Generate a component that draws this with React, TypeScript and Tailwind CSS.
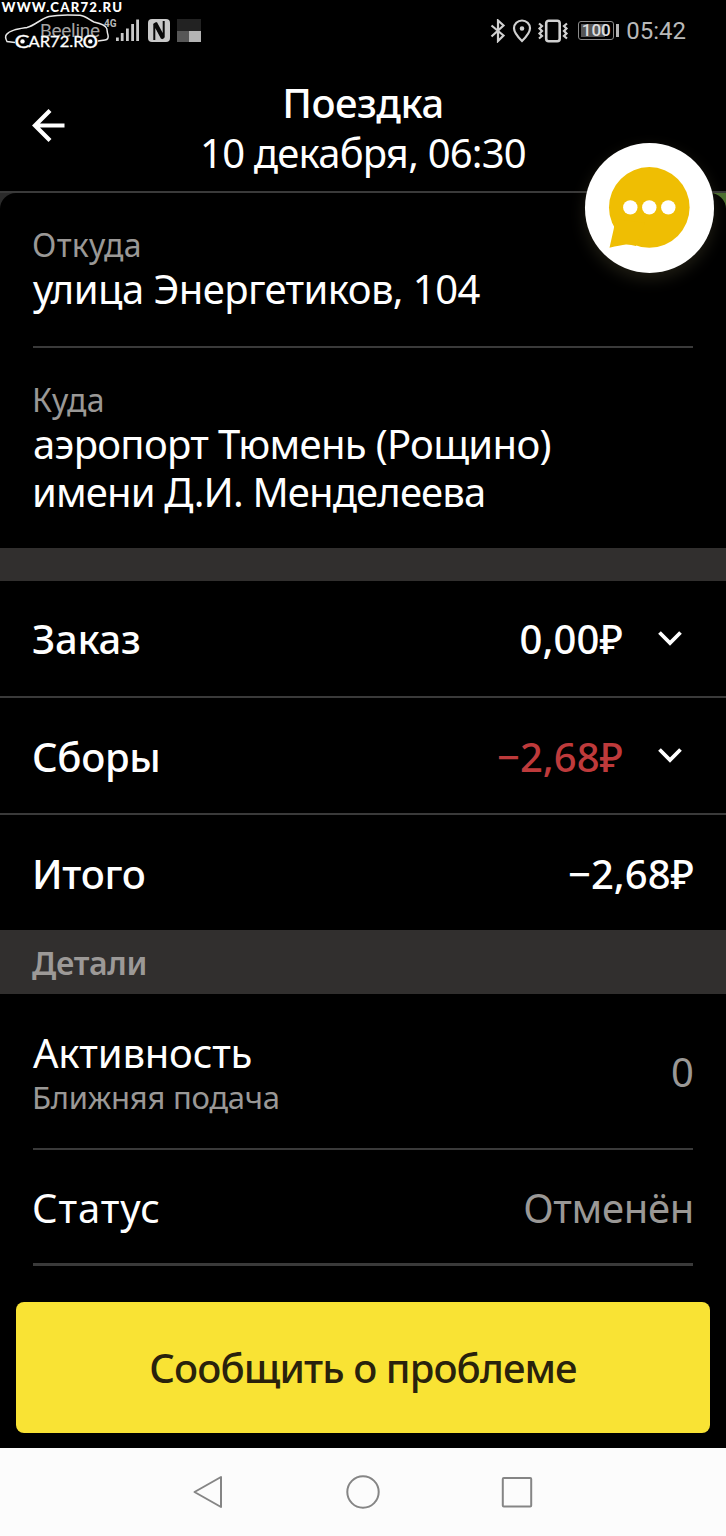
import clsx from 'clsx'
import type { ReactNode } from 'react'

/** Site watermark: address line and a small car drawn over the status bar. */
function Watermark() {
  return (
    <svg className="absolute left-0 top-0" width="130" height="52" viewBox="0 0 130 52" fill="none">
      <text x="1.5" y="11.8" textLength="120.5" fill="#fff" fontFamily="Lato, sans-serif" fontWeight="900" fontSize="13.2">
        WWW.CAR72.RU
      </text>
      <path
        d="M15 42.5 7 41.5Q4.5 37 6.5 34.5C10 30 18 29 27 27.5 35 25.5 41 18.5 49 16.5 58 14.5 72 14.8 80 15.3 86 16 90 20.5 94 22 98 23 105 24.5 106.5 28 107.5 30 106.800 32 108 35Q109 39.5 105 40L98 41"
        stroke="#e8e8e8"
        strokeWidth="1.5"
      />
      <g fill="#fff" stroke="#fff" strokeWidth="0.3" fontFamily="Lato, sans-serif">
        <text x="14.5" y="47.5" textLength="15" lengthAdjust="spacingAndGlyphs" fontSize="17">C</text>
        <text x="28.5" y="47.3" textLength="55" lengthAdjust="spacingAndGlyphs" fontSize="15.8">AR72.R</text>
        <text x="82.500" y="47.5" textLength="15.5" lengthAdjust="spacingAndGlyphs" fontSize="17">O</text>
      </g>
      <circle cx="22.500" cy="41.400" r="2.200" fill="#fff" />
      <circle cx="90.300" cy="41.400" r="2.200" fill="#fff" />
    </svg>
  )
}

function StatusBar() {
  return (
    <div className="flex h-[60px] shrink-0 items-start pl-10 pr-10 pt-[19px] font-[Roboto,sans-serif] text-[#b9b9b9]">
      <span className="mt-[1px] w-[64px] text-[19px] leading-[22px] tracking-[-0.3px] text-[#a4a4a4]">Beeline</span>
      <span className="-mt-[2px] w-3 text-[10px] font-bold leading-[14px]">4G</span>
      <svg width="23" height="23" viewBox="0 0 23 23" fill="#c9c9c9">
        <rect x="0" y="18.5" width="2.8" height="3.5" />
        <rect x="4.8" y="14" width="2.8" height="8" />
        <rect x="10" y="9.5" width="2.8" height="12.5" />
        <rect x="15.2" y="5" width="2.8" height="17" />
        <rect x="20.2" y="0.5" width="2.8" height="21.5" />
      </svg>
      <svg className="ml-[9px]" width="22" height="23" viewBox="0 0 22 23" fill="none">
        <rect width="22" height="23" rx="4" fill="#c9c9c9" />
        <path d="M6.300 21V5L14 19.500" stroke="#0a0a0a" strokeWidth="2" />
        <path d="M8 3.500 15.700 18V2" stroke="#0a0a0a" strokeWidth="2" />
        <path d="M6.500 4 15.500 19.500" stroke="#0a0a0a" strokeWidth="2.600" />
      </svg>
      <span className="ml-[7px] grid h-[23px] w-6 grid-cols-2 grid-rows-2">
        <i className="col-span-2 bg-[#222]" />
        <i className="bg-[#575757]" />
        <i className="bg-[#b4b4b4]" />
      </span>

      <svg className="ml-auto" width="80" height="24" viewBox="0 0 80 24" fill="none" stroke="#d0d0d0" strokeWidth="2.2">
        <path d="M1.5 6.5 13.5 16.5 8 22V1.500L13.5 6.500 1.5 17.5" />
        <path d="M32 1.5C27.5 1.5 24 5 24 9.2 24 14 28.5 18.5 32 22 35.5 18.5 40 14 40 9.2 40 5 36.5 1.5 32 1.5Z" />
        <circle cx="32" cy="9.5" r="1.2" fill="#d0d0d0" />
        <rect x="56.2" y="1.8" width="13.5" height="20.4" rx="2.5" strokeWidth="2.6" />
        <path d="M49 4.500 52 7 49.500 9.5 52 12 49.500 14.5 52 17 49 19.5M77 4.5 74 7 76.500 9.5 74 12 76.500 14.5 74 17 77 19.5" />
      </svg>
      <span className="ml-[8px] mt-[2px] flex h-[19px] w-[36px] items-center rounded-[3px] border border-[#8a8a8a] p-[2px]">
        <b className="flex h-full w-full items-center justify-center bg-linear-to-r from-[#555] from-80% to-black to-80% text-[17px] font-medium leading-none text-[#ddd]">100</b>
      </span>
      <i className="ml-[2px] mt-[5px] h-[13px] w-[3px] bg-[#b5b5b5]" />
      <span className="ml-[7px] text-[24px] leading-[25px]">05:42</span>
    </div>
  )
}

function Chevron() {
  return (
    <svg className="ml-[34px] mr-[43px]" width="26" height="18" viewBox="0 0 26 18" fill="none">
      <path d="M2.5 2.5 13 13 23.5 2.5" stroke="#fff" strokeWidth="3.8" />
    </svg>
  )
}

function MoneyRow({ label, children, className }: { label: string; children: ReactNode; className?: string }) {
  return (
    <div className={clsx('flex shrink-0 items-center pl-8 text-[40px] font-medium leading-[55px]', className)}>
      <span className="flex-1 tracking-[-0.3px]">{label}</span>
      {children}
    </div>
  )
}

function ChatButton() {
  return (
    <button type="button" className="absolute left-[585px] top-[143px] h-[130px] w-[129px] rounded-full bg-white shadow-[0_6px_16px_rgba(70,66,45,0.45)]">
      <svg width="129" height="130" viewBox="0 0 129 130">
        <circle cx="64.3" cy="64.4" r="40.3" fill="#efbe03" />
        <path d="M26 75Q30.5 81 28.5 87L24.5 104.7Q35 102 41 101.4 46 101.3 51 103L60 80Z" fill="#efbe03" />
        <g fill="#fff">
          <circle cx="45.3" cy="64.4" r="7.2" />
          <circle cx="64.3" cy="64.4" r="7.2" />
          <circle cx="83.3" cy="64.4" r="7.2" />
        </g>
      </svg>
    </button>
  )
}

export default function App() {
  return (
    <div className="relative flex h-[1536px] w-[726px] flex-col overflow-hidden bg-black font-['Noto_Sans',sans-serif] text-white">
      <StatusBar />
      <Watermark />

      <header className="flex h-[133px] shrink-0 border-b-2 border-[#3a3a3a] pt-[18px] text-[40px] leading-[50px]">
        <svg className="ml-8 mt-[31px]" width="34" height="34" viewBox="0 0 34 34" fill="none" stroke="#fff" strokeWidth="4.2">
          <path d="M32.5 16.5H3.5M18 1.5 3 16.5 18 31.5" />
        </svg>
        <div className="mr-[66px] flex-1 text-center">
          <h1 className="font-medium tracking-[-0.5px]">Поездка</h1>
          <p className="tracking-[-0.8px]">10 декабря, 06:30</p>
        </div>
      </header>

      <div className="h-[355px] shrink-0 bg-linear-to-r from-[#2b2b2b] from-50% to-[#4c7030] to-50%">
        <section className="h-full rounded-t-[16px] bg-black px-[33px] pt-[34px]">
          <p className="-ml-[1px] text-[32px] leading-[35px] tracking-[0.3px] text-[#9a9896]">Откуда</p>
          <p className="text-[40px] leading-[53px] tracking-[-0.57px]">улица Энергетиков, 104</p>
          <hr className="mb-[34px] mt-[31px] border-t-2 border-[#3a3a3a]" />
          <p className="-ml-[1px] text-[32px] leading-[35px] tracking-[0.3px] text-[#9a9896]">Куда</p>
          <p className="mt-[3px] text-[40px] leading-12 tracking-[-0.68px]">аэропорт Тюмень (Рощино)</p>
          <p className="-ml-[1px] text-[40px] leading-12 tracking-[-0.86px]">имени Д.И. Менделеева</p>
        </section>
      </div>

      <div className="h-[33px] shrink-0 bg-[#312f2e]" />

      <MoneyRow label="Заказ" className="h-[115px]">
        <span className="tracking-[0.1px]">0,00₽</span>
        <Chevron />
      </MoneyRow>
      <MoneyRow label="Сборы" className="h-[117px] border-t-2 border-[#3a3a3a] pt-[1px]">
        <span className="text-[#be3a3b]">−2,68₽</span>
        <Chevron />
      </MoneyRow>
      <MoneyRow label="Итого" className="h-[117px] border-t-2 border-[#3a3a3a] pt-[2px]">
        <span className="mr-8">−2,68₽</span>
      </MoneyRow>

      <h2 className="flex h-16 shrink-0 items-center bg-[#312f2e] pl-8 text-[32px] font-semibold leading-[35px] tracking-[-0.3px] text-[#9c9997]">
        Детали
      </h2>

      <section className="mx-[33px] shrink-0 text-[40px]">
        <div className="flex h-[156px] items-center justify-between border-b-2 border-[#3a3a3a]">
          <div className="pt-[4px]">
            <p className="leading-[47px] tracking-[-0.2px]">Активность</p>
            <p className="-ml-[1px] text-[31px] leading-[42px] tracking-[-0.25px] text-[#9a9896]">Ближняя подача</p>
          </div>
          <span className="-mr-[1px] leading-[55px] text-[#9a9896]">0</span>
        </div>
        <div className="flex h-[116px] items-center justify-between border-b-[3px] border-[#3a3a3a] pt-[2px] leading-[55px]">
          <span className="-ml-[1px] tracking-[0.9px]">Статус</span>
          <span className="-mr-[1px] tracking-[-0.3px] text-[#9a9896]">Отменён</span>
        </div>
      </section>

      <button
        type="button"
        className="mx-4 mt-9 h-[131px] shrink-0 rounded-[8px] bg-[#f9e334] text-[40px] font-medium leading-[55px] tracking-[-0.9px] text-[#29220c]"
      >
        Сообщить о проблеме
      </button>

      <nav className="mt-auto flex h-[88px] shrink-0 items-center justify-center bg-[#fcfcfc]">
        <svg width="342" height="36" viewBox="0 0 342 36" fill="none" stroke="#858585" strokeWidth="2" strokeLinejoin="round">
          <path d="M29 3V33L2.500 18Z" />
          <circle cx="171" cy="18" r="15.7" />
          <rect x="310.8" y="4" width="28.4" height="28.5" rx="1" />
        </svg>
      </nav>

      <ChatButton />
    </div>
  )
}
